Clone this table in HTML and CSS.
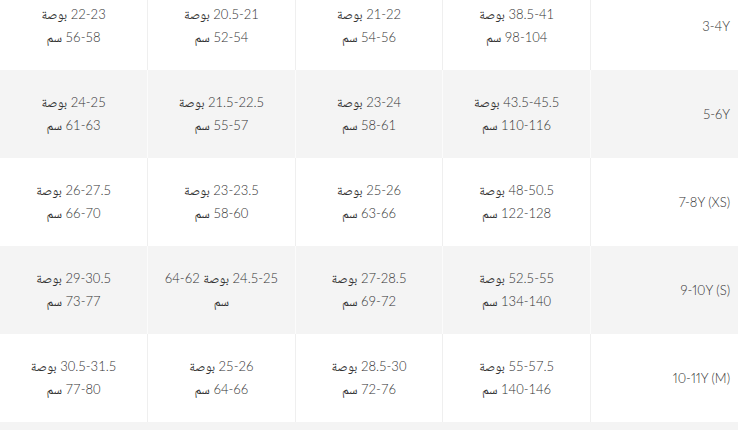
FILE: index.html
```html
<!DOCTYPE html>
<html lang="ar" dir="rtl">
<head>
<meta charset="utf-8">
<link rel="stylesheet" href="styles.css">
</head>
<body>
<table class="size-table">
  <tbody>
    <tr class="row row-white">
      <td class="label">3-4Y</td>
      <td class="cell">38.5-41 بوصة<br>98-104 سم</td>
      <td class="cell">21-22 بوصة<br>54-56 سم</td>
      <td class="cell">20.5-21 بوصة<br>52-54 سم</td>
      <td class="cell">22-23 بوصة<br>56-58 سم</td>
    </tr>
    <tr class="row row-gray">
      <td class="label">5-6Y</td>
      <td class="cell">43.5-45.5 بوصة<br>110-116 سم</td>
      <td class="cell">23-24 بوصة<br>58-61 سم</td>
      <td class="cell">21.5-22.5 بوصة<br>55-57 سم</td>
      <td class="cell">24-25 بوصة<br>61-63 سم</td>
    </tr>
    <tr class="row row-white">
      <td class="label">7-8Y (XS)</td>
      <td class="cell">48-50.5 بوصة<br>122-128 سم</td>
      <td class="cell">25-26 بوصة<br>63-66 سم</td>
      <td class="cell">23-23.5 بوصة<br>58-60 سم</td>
      <td class="cell">26-27.5 بوصة<br>66-70 سم</td>
    </tr>
    <tr class="row row-gray">
      <td class="label">9-10Y (S)</td>
      <td class="cell">52.5-55 بوصة<br>134-140 سم</td>
      <td class="cell">27-28.5 بوصة<br>69-72 سم</td>
      <td class="cell">24.5-25 بوصة <span class="ltr">64-62</span><br>سم</td>
      <td class="cell">29-30.5 بوصة<br>73-77 سم</td>
    </tr>
    <tr class="row row-white">
      <td class="label">10-11Y (M)</td>
      <td class="cell">55-57.5 بوصة<br>140-146 سم</td>
      <td class="cell">28.5-30 بوصة<br>72-76 سم</td>
      <td class="cell">25-26 بوصة<br>64-66 سم</td>
      <td class="cell">30.5-31.5 بوصة<br>77-80 سم</td>
    </tr>
  </tbody>
</table>
<div class="next-row"></div>
</body>
</html>
```

FILE: styles.css
```css
html, body {
  margin: 0;
  padding: 0;
  background: #ffffff;
}

body {
  font-family: "Lato", "Noto Naskh Arabic", "Noto Sans Arabic", "DejaVu Sans", sans-serif;
  font-size: 13px;
  font-weight: 300;
  color: #333333;
  overflow: hidden;
  height: 430px;
}

.size-table {
  width: 738px;
  margin-top: -18px;
  border-collapse: collapse;
  table-layout: fixed;
}

.row {
  height: 88px;
}

.row-white {
  background: #ffffff;
}

.row-gray {
  background: #f4f4f4;
}

.cell,
.label {
  padding: 0 10px;
  line-height: 23px;
  vertical-align: middle;
  border-left: 1px solid #efefef;
}

.row-gray .cell,
.row-gray .label {
  border-left-color: #fbfbfb;
}

.cell {
  text-align: center;
}

.cell:last-child {
  border-left: none;
}

.label {
  text-align: right;
  padding-right: 8px;
  font-variant-numeric: proportional-nums;
}

.ltr {
  direction: ltr;
  unicode-bidi: isolate;
}

.next-row {
  height: 20px;
  background: #f4f4f4;
}
```
